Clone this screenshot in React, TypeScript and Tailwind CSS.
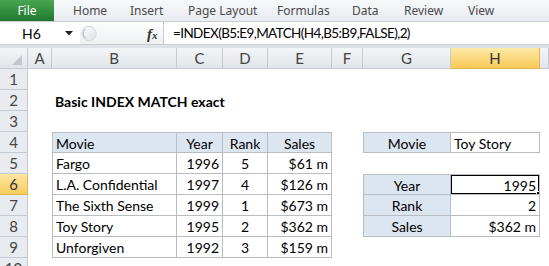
import React from 'react';

type Cell = {
	v?: string;
	align?: 'l' | 'c' | 'r';
	bold?: boolean;
	head?: boolean;
	box?: boolean;
	top?: boolean;
	left?: boolean;
	active?: boolean;
};

const cellFont = { fontFamily: 'Lato, "Liberation Sans", sans-serif' };

const colLetters = ['A', 'B', 'C', 'D', 'E', 'F', 'G', 'H', ''];

const tabs = [
	{ label: 'Home', w: 'w-[57px]' },
	{ label: 'Insert', w: 'w-[58px]' },
	{ label: 'Page Layout', w: 'w-[89px]' },
	{ label: 'Formulas', w: 'w-[75px]' },
	{ label: 'Data', w: 'w-[52px]' },
	{ label: 'Review', w: 'w-[64px]' },
	{ label: 'View', w: 'w-[50px]' },
];

const movies = [
	['Fargo', '1996', '5', '$61 m'],
	['L.A. Confidential', '1997', '4', '$126 m'],
	['The Sixth Sense', '1999', '1', '$673 m'],
	['Toy Story', '1995', '2', '$362 m'],
	['Unforgiven', '1992', '3', '$159 m'],
];

const lookup: Record<number, [string, string]> = {
	6: ['Year', '1995'],
	7: ['Rank', '2'],
	8: ['Sales', '$362 m'],
};

// builds the 9 visible columns (A..I) for a sheet row
const buildRow = (r: number): Cell[] => {
	const row: Cell[] = Array.from({ length: 9 }, () => ({}));
	if (r === 2) row[1] = { v: 'Basic INDEX MATCH exact', bold: true };
	if (r === 4) {
		row[1] = { v: 'Movie', head: true, box: true, top: true, left: true };
		row[2] = { v: 'Year', head: true, box: true, top: true, align: 'c' };
		row[3] = { v: 'Rank', head: true, box: true, top: true, align: 'c' };
		row[4] = { v: 'Sales', head: true, box: true, top: true, align: 'c' };
		row[6] = { v: 'Movie', head: true, box: true, top: true, left: true, align: 'c' };
		row[7] = { v: 'Toy Story', box: true, top: true };
	}
	if (r >= 5 && r <= 9) {
		const m = movies[r - 5];
		row[1] = { v: m[0], box: true, left: true };
		row[2] = { v: m[1], box: true, align: 'r' };
		row[3] = { v: m[2], box: true, align: 'c' };
		row[4] = { v: m[3], box: true, align: 'r' };
	}
	if (lookup[r]) {
		row[6] = { v: lookup[r][0], head: true, box: true, left: true, top: r === 6, align: 'c' };
		row[7] = { v: lookup[r][1], box: true, top: r === 6, align: 'r', active: r === 6 };
	}
	return row;
};

const SheetCell = ({ cell }: { cell: Cell }) => {
	const align =
		cell.align === 'c' ? 'justify-center' : cell.align === 'r' ? 'justify-end' : 'justify-start';
	return (
		<div
			className={`relative flex items-center h-[21px] px-[3px] whitespace-nowrap text-[14px] text-black ${align} ${
				cell.head ? 'bg-[#dce6f1]' : 'bg-white'
			} ${cell.box ? 'border-r border-b border-[#b9bcc1]' : ''} ${
				cell.top ? 'border-t' : ''
			} ${cell.left ? 'border-l' : ''} ${cell.bold ? 'font-bold overflow-visible z-10' : 'overflow-hidden'}`}
		>
			<span className="leading-none pt-[2px]">{cell.v}</span>
			{cell.active && (
				<>
					<div className="absolute -inset-[1px] border-2 border-black pointer-events-none" />
					<div className="absolute -right-[3px] -bottom-[3px] w-[6px] h-[6px] bg-black border border-white" />
				</>
			)}
		</div>
	);
};

export default function App() {
	return (
		<div className="w-[549px] h-[266px] overflow-hidden bg-white" style={cellFont}>
			{/* ribbon tabs */}
			<div
				className="flex h-[22px] bg-linear-to-b from-[#f7f8fa] to-[#e8ecf1] border-b border-[#c3c9d1] text-[12px] text-[#4a4a4a]"
				style={{ fontFamily: '"Noto Sans", "Liberation Sans", sans-serif' }}
			>
				<div className="w-[54px] h-full flex items-center justify-center bg-linear-to-b from-[#49a552] to-[#1f7a2f] text-white">
					File
				</div>
				<div className="w-[19px]" />
				{tabs.map((t) => (
					<div key={t.label} className={`${t.w} flex items-center`}>
						{t.label}
					</div>
				))}
			</div>

			{/* formula bar */}
			<div className="flex h-[23px] bg-white border-b border-[#c6ccd4] text-[14px]">
				<div className="w-[80px] flex items-center relative">
					<span className="ml-[22px]">H6</span>
					<svg className="absolute left-[65px] top-[9px]" width="8" height="5" viewBox="0 0 8 5">
						<path d="M0 0 L8 0 L4 4.5 Z" fill="#222" />
					</svg>
				</div>
				<div className="w-[84px] flex items-center relative bg-linear-to-b from-[#fdfdfd] to-[#eef0f3] border-r border-[#c6ccd4]">
					<svg className="absolute left-[1px] top-[3px]" width="16" height="17" viewBox="0 0 16 17">
						<defs>
							<linearGradient id="knob" x1="0" y1="0" x2="1" y2="1">
								<stop offset="0" stopColor="#ffffff" />
								<stop offset="1" stopColor="#dde0e5" />
							</linearGradient>
						</defs>
						<circle cx="8" cy="8.5" r="7.2" fill="url(#knob)" stroke="#d3d7dc" strokeWidth="1" />
						<path d="M5 4 A5 5 0 0 0 5 13" fill="none" stroke="#c2c6cd" strokeWidth="1.2" />
					</svg>
					<span
						className="absolute left-[67px] top-[1px] italic font-bold text-[15px] text-[#333]"
						style={{ fontFamily: '"Liberation Serif", serif' }}
					>
						f<span className="text-[11px]">x</span>
					</span>
				</div>
				<div className="flex-1 flex items-center pl-[9px] text-black text-[13.5px] whitespace-nowrap tracking-[-0.6px]">
					=INDEX(B5:E9,MATCH(H4,B5:B9,FALSE),2)
				</div>
			</div>

			<div className="h-[3px] bg-[#dfe3e8]" />

			{/* grid */}
			<div className="grid grid-cols-[28px_24px_125px_46px_45px_64px_31px_88px_89px_9px]">
				{/* column headers */}
				<div className="relative h-[21px] bg-linear-to-b from-[#f4f5f7] to-[#e1e5ea] border-r border-b border-[#c4cad2]">
					<svg className="absolute right-[5px] bottom-[3px]" width="10" height="10" viewBox="0 0 10 10">
						<path d="M10 0 L10 10 L0 10 Z" fill="#c2c7ce" />
					</svg>
				</div>
				{colLetters.map((c, i) => (
					<div
						key={i}
						className={`h-[21px] flex items-center justify-center text-[15px] border-r border-b ${
							c === 'H'
								? 'bg-linear-to-b from-[#fde9a6] to-[#f8c954] border-[#e2b34e] text-[#333]'
								: 'bg-linear-to-b from-[#f4f5f7] to-[#e1e5ea] border-[#c4cad2] text-[#444]'
						}`}
					>
						{c}
					</div>
				))}

				{Array.from({ length: 10 }, (_, i) => i + 1).map((r) => (
					<React.Fragment key={r}>
						<div
							className={`h-[21px] flex items-center justify-center text-[15px] border-r border-b ${
								r === 6
									? 'bg-linear-to-b from-[#fde6a0] to-[#f8cc5c] border-[#e2b34e] text-[#333]'
									: 'bg-[#e8ebef] border-[#c4cad2] text-[#444]'
							}`}
						>
							{r}
						</div>
						{buildRow(r).map((cell, ci) => (
							<SheetCell key={ci} cell={cell} />
						))}
					</React.Fragment>
				))}
			</div>
		</div>
	);
}
